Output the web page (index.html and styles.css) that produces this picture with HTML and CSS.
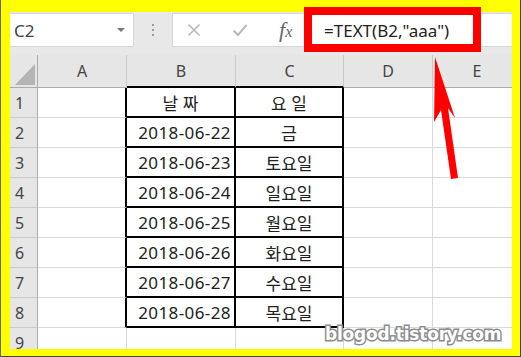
FILE: index.html
```html
<!DOCTYPE html>
<html lang="ko">
<head>
<meta charset="utf-8">
<link rel="stylesheet" href="styles.css">
</head>
<body>
<div class="frame">
  <div class="screen">
    <div class="fbar">
      <div class="namebox"><span class="ref">C2</span><span class="caret"></span></div>
      <div class="grip"><i></i><i></i><i></i></div>
      <div class="formula">
        <span class="ico cancel"><svg width="14" height="14" viewBox="0 0 14 14"><path d="M1.5 1.5 L12.5 12.5 M12.5 1.5 L1.5 12.5" stroke="#b9b9b9" stroke-width="1.6" fill="none"/></svg></span>
        <span class="ico enter"><svg width="16" height="14" viewBox="0 0 16 14"><path d="M1.5 7.5 L6 12 L14.5 2" stroke="#b9b9b9" stroke-width="2" fill="none"/></svg></span>
        <span class="fx"><span class="f">f</span><span class="x">x</span></span>
        <span class="ftext">=TEXT(B2,"aaa")</span>
      </div>
    </div>
    <div class="sheet">
      <div class="hd corner"><span class="tri"></span></div>
      <div class="hd col">A</div>
      <div class="hd col tb">B</div>
      <div class="hd col tb">C</div>
      <div class="hd col">D</div>
      <div class="hd col">E</div>

      <div class="hd row">1</div><div class="c ta"></div><div class="c tc ctr">날 짜</div><div class="c tc ctr">요 일</div><div class="c"></div><div class="c"></div>
      <div class="hd row">2</div><div class="c ta"></div><div class="c tc num">2018-06-22</div><div class="c tc ctr">금</div><div class="c"></div><div class="c"></div>
      <div class="hd row">3</div><div class="c ta"></div><div class="c tc num">2018-06-23</div><div class="c tc ctr">토요일</div><div class="c"></div><div class="c"></div>
      <div class="hd row">4</div><div class="c ta"></div><div class="c tc num">2018-06-24</div><div class="c tc ctr">일요일</div><div class="c"></div><div class="c"></div>
      <div class="hd row">5</div><div class="c ta"></div><div class="c tc num">2018-06-25</div><div class="c tc ctr">월요일</div><div class="c"></div><div class="c"></div>
      <div class="hd row">6</div><div class="c ta"></div><div class="c tc num">2018-06-26</div><div class="c tc ctr">화요일</div><div class="c"></div><div class="c"></div>
      <div class="hd row">7</div><div class="c ta"></div><div class="c tc num">2018-06-27</div><div class="c tc ctr">수요일</div><div class="c"></div><div class="c"></div>
      <div class="hd row">8</div><div class="c ta"></div><div class="c tc num">2018-06-28</div><div class="c tc ctr">목요일</div><div class="c"></div><div class="c"></div>
      <div class="hd row">9</div><div class="c"></div><div class="c"></div><div class="c"></div><div class="c"></div><div class="c"></div>
    </div>
  </div>
  <div class="redbox"></div>
  <svg class="arrow" width="521" height="357" viewBox="0 0 521 357">
    <polygon points="434,57 454,118 447,108 457,178 450,179 440,110 433,122" fill="#ff0000"/>
  </svg>
  <div class="watermark">blogod.tistory.com</div>
</div>
</body>
</html>
```
FILE: styles.css
```css
* { box-sizing: border-box; }
html, body { margin: 0; padding: 0; }
body { width: 521px; height: 357px; overflow: hidden; background: #fff; }

.frame {
  position: relative;
  width: 521px;
  height: 357px;
  background: #ffff00;
  border-left: 1px solid #666;
  border-right: 1px solid #444;
  border-bottom: 1px solid #444;
  padding: 12px 8px 7px 9px;
}
.screen {
  width: 502px;
  height: 337px;
  overflow: hidden;
  background: #fff;
  font-family: "Noto Sans", sans-serif;
}

.fbar {
  height: 43px;
  background: #e8e8e8;
  display: flex;
  align-items: flex-start;
  padding-top: 1px;
}
.namebox {
  width: 124px;
  height: 34px;
  background: #fff;
  border: 1px solid #d6d6d6;
  border-left: none;
  display: flex;
  align-items: center;
  justify-content: space-between;
  padding: 0 8px 0 4px;
}
.ref { font-size: 17px; color: #444; }
.caret {
  width: 0; height: 0;
  border-left: 4px solid transparent;
  border-right: 4px solid transparent;
  border-top: 4px solid #777;
}
.grip {
  width: 38px;
  height: 34px;
  display: flex;
  flex-direction: column;
  align-items: center;
  justify-content: center;
  gap: 3px;
}
.grip i { display: block; width: 2px; height: 2px; background: #9a9a9a; }
.formula {
  flex: 1;
  height: 34px;
  background: #fff;
  border: 1px solid #d6d6d6;
  border-right: none;
  display: flex;
  align-items: center;
  padding-left: 14px;
}
.ico { display: flex; align-items: center; justify-content: center; }
.cancel { width: 14px; }
.enter { width: 16px; margin-left: 31px; }
.fx {
  margin-left: 31px;
  font-family: "Liberation Serif", serif;
  font-style: italic;
  color: #666;
  width: 18px;
  line-height: 1;
}
.fx .f { font-size: 22px; }
.fx .x { font-size: 16px; }
.ftext {
  margin-left: 27px;
  font-size: 17px;
  color: #222;
  white-space: nowrap;
}

.sheet {
  display: grid;
  grid-template-columns: 28px 89px 109px 108px 89px 89px;
  grid-template-rows: 33px repeat(9, 30px);
  font-size: 17px;
  color: #222;
}
.hd {
  background: #e6e6e6;
  color: #444;
  font-size: 16px;
  display: flex;
  align-items: center;
}
.col {
  justify-content: center;
  border-right: 1px solid #cacaca;
  border-bottom: 1px solid #ababab;
}
.col.tb { border-bottom: 2px solid #000; }
.corner {
  border-right: 1px solid #ababab;
  border-bottom: 1px solid #ababab;
  align-items: flex-end;
  justify-content: flex-end;
  padding: 0 2px 2px 0;
}
.tri {
  width: 20px;
  height: 21px;
  background: #b4b4b4;
  clip-path: polygon(100% 0, 100% 100%, 0 100%);
}
.row {
  padding-left: 5px;
  border-right: 1px solid #ababab;
  border-bottom: 1px solid #cacaca;
}
.c {
  border-right: 1px solid #d9d9d9;
  border-bottom: 1px solid #d9d9d9;
  display: flex;
  align-items: center;
  white-space: nowrap;
}
.ta { border-right: 2px solid #000; }
.tc { border-right: 2px solid #000; border-bottom: 2px solid #000; }
.ctr {
  justify-content: center;
  font-family: "Noto Sans CJK KR", sans-serif;
}
.num {
  justify-content: flex-end;
  padding-right: 3px;
  letter-spacing: 0.4px;
}

.redbox {
  position: absolute;
  left: 303px;
  top: 7px;
  width: 177px;
  height: 45px;
  border: 8px solid #ff0000;
}
.arrow {
  position: absolute;
  left: 0;
  top: 0;
  pointer-events: none;
}
.watermark {
  position: absolute;
  left: 324px;
  top: 324px;
  font-family: "DejaVu Sans", sans-serif;
  font-weight: bold;
  font-size: 17px;
  color: #fff;
  -webkit-text-stroke: 3px #8c8c8c;
  paint-order: stroke fill;
  letter-spacing: -0.2px;
  white-space: nowrap;
}
```
